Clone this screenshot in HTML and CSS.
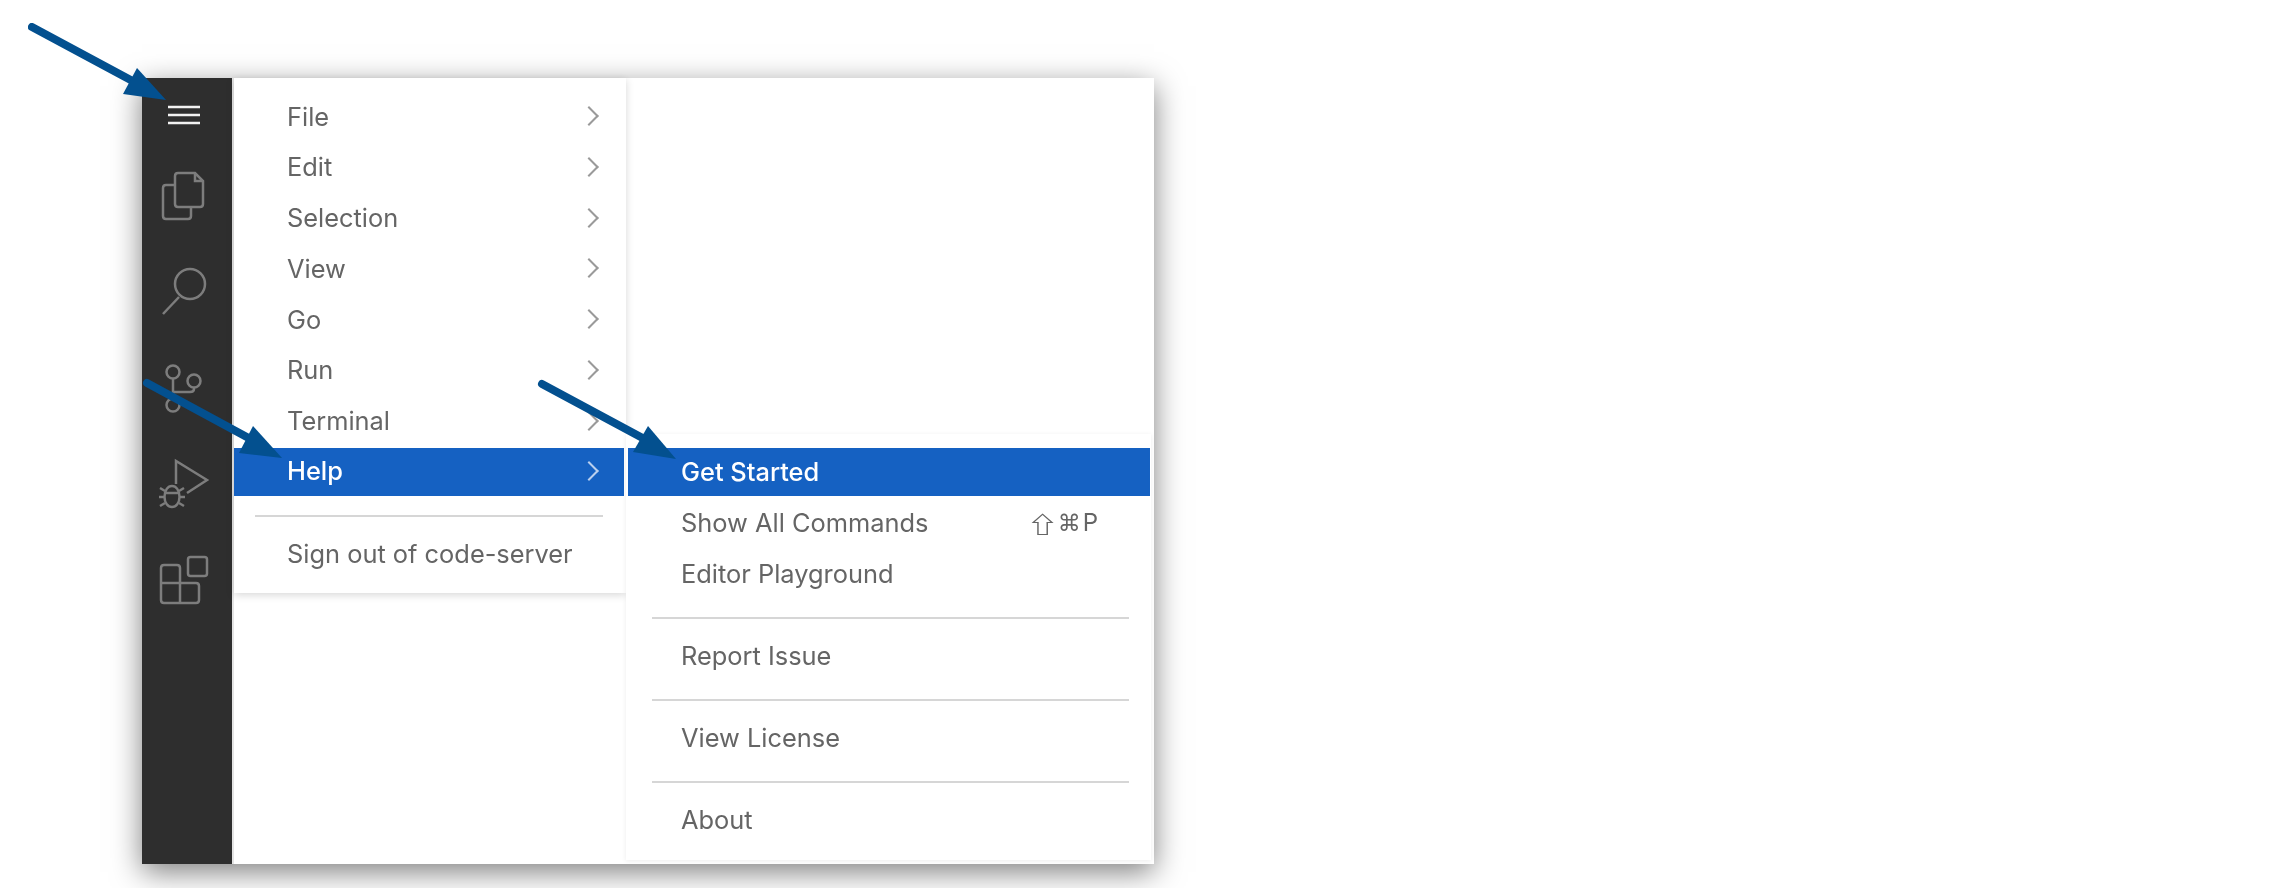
FILE: index.html
```html
<!DOCTYPE html>
<html lang="en">
<head>
    <meta charset="UTF-8">
    <meta name="viewport" content="width=device-width, initial-scale=1.0">
    <title>code-server menu</title>
    <link rel="stylesheet" href="styles.css">
</head>
<body>
    <div class="window">
        <div class="sidebar">
            <div class="action action-menu">
                <svg class="icon" viewBox="156 87 56 56">
                    <path class="white" d="M168 107H200M168 115H200M168 123H200"/>
                </svg>
            </div>
            <div class="action">
                <svg class="icon" viewBox="156 171 56 56">
                    <path d="M175 185H166Q163 185 163 188V216Q163 219 166 219H188Q191 219 191 216V207"/>
                    <path d="M178 173H195L203 181V204Q203 207 200 207H178Q175 207 175 204V176Q175 173 178 173Z"/>
                    <path d="M195 173V181H203"/>
                </svg>
            </div>
            <div class="action">
                <svg class="icon" viewBox="156 265 56 56">
                    <circle cx="190" cy="284" r="15"/>
                    <path d="M179 297L163 314"/>
                </svg>
            </div>
            <div class="action">
                <svg class="icon" viewBox="156 359 56 56">
                    <circle cx="173" cy="372" r="6.5"/>
                    <circle cx="194" cy="381" r="6.5"/>
                    <circle cx="173" cy="405" r="6.5"/>
                    <path d="M173 379V398M194 388V389Q194 392 190 392H173"/>
                </svg>
            </div>
            <div class="action">
                <svg class="icon" viewBox="156 453 56 56">
                    <path d="M176 484V461L207 480L187 493"/>
                    <path d="M164.500 497C164.500 490 168 486 172 486C176 486 179.500 490 179.500 497C179.500 503 176 507 172 507C168 507 164.500 503 164.500 497Z"/>
                    <path d="M165 493H179M160 488L165 491M184 488L179 491M159 497H164M180 497H185M160 506L165 503M184 506L179 503"/>
                </svg>
            </div>
            <div class="action">
                <svg class="icon" viewBox="156 547 56 56">
                    <rect x="188" y="557" width="19" height="19" rx="2.500"/>
                    <path d="M161 583V568Q161 565 164 565H177Q180 565 180 568V583H196Q199 583 199 586V600Q199 603 196 603H164Q161 603 161 600V583H180V603"/>
                </svg>
            </div>
        </div>
        <div class="content">
            <div class="menu menu-main">
                <div class="item"><span>File</span><span class="chevron"></span></div>
                <div class="item"><span>Edit</span><span class="chevron"></span></div>
                <div class="item"><span>Selection</span><span class="chevron"></span></div>
                <div class="item"><span>View</span><span class="chevron"></span></div>
                <div class="item"><span>Go</span><span class="chevron"></span></div>
                <div class="item"><span>Run</span><span class="chevron"></span></div>
                <div class="item"><span>Terminal</span><span class="chevron"></span></div>
                <div class="item active"><span>Help</span><span class="chevron"></span></div>
                <div class="separator"></div>
                <div class="item"><span>Sign out of code-server</span></div>
            </div>
            <div class="menu menu-sub">
                <div class="item active"><span>Get Started</span></div>
                <div class="item"><span>Show All Commands</span><span class="keys"><span class="shift">⇧</span>⌘<span class="key-letter">P</span></span></div>
                <div class="item"><span>Editor Playground</span></div>
                <div class="separator"></div>
                <div class="item"><span>Report Issue</span></div>
                <div class="separator"></div>
                <div class="item"><span>View License</span></div>
                <div class="separator"></div>
                <div class="item"><span>About</span></div>
            </div>
        </div>
    </div>

    <!-- annotation arrows drawn over the screenshot -->
    <svg class="arrows" viewBox="0 0 2284 888">
        <path class="shaft" d="M32 27L140 85"/>
        <path class="head" d="M166 100L137 68L123 94Z"/>
        <path class="shaft" d="M147 383L256 442"/>
        <path class="head" d="M282 458L253 426L239 453Z"/>
        <path class="shaft" d="M542 384L650 442"/>
        <path class="head" d="M676 459L648 426L633 452Z"/>
    </svg>
</body>
</html>
```

FILE: styles.css
```css
body {
    margin: 0;
    height: 888px;
    overflow: hidden;
    background: white;
    font-family: Inter, "Liberation Sans", sans-serif;
    filter: blur(0.4px);
}
.window {
    display: flex;
    width: 1012px;
    height: 786px;
    margin: 78px 0 0 142px;
    background: white;
    box-shadow: 0 8px 28px rgba(0, 0, 0, 0.5);
}
.sidebar {
    width: 90px;
    flex-shrink: 0;
    background-color: #2e2e2e;
    border-right: 2px solid #e4e4e4;
}
.action {
    height: 94px;
    display: flex;
    align-items: center;
    justify-content: center;
    padding-right: 6px;
}
.action-menu {
    height: 74px;
}
.icon {
    width: 56px;
    height: 56px;
    overflow: visible;
    fill: none;
    stroke: #7d7d7d;
    stroke-width: 2.5;
}
.icon .white {
    stroke: #f2f2f2;
}
.content {
    display: flex;
    align-items: flex-start;
    flex: 1;
}
.menu {
    box-sizing: border-box;
    background: white;
    padding: 14px 0 15px;
}
.menu-main {
    width: 392px;
    box-shadow: 0 2px 8px rgba(0, 0, 0, 0.16);
}
.menu-sub {
    width: 525px;
    margin-top: 356px;
    padding-bottom: 16px;
    box-shadow: 0 1px 5px rgba(0, 0, 0, 0.08);
    position: relative;
}
.item {
    display: flex;
    align-items: center;
    justify-content: space-between;
    height: 48px;
    margin: 0 2px 2.8px 0;
    padding: 0 26px 0 53px;
    font-size: 25.4px;
    color: #656565;
}
.item:last-child {
    margin-bottom: 0;
}
.menu-sub .item {
    margin: 0 1px 2.8px 2px;
    padding: 0 52px 0 53px;
}
.menu-sub .item:last-child {
    margin-bottom: 0;
}
.item.active {
    box-sizing: border-box;
    padding-bottom: 2px;
    background-color: #1561c2;
    color: white;
    font-weight: 500;
}
.chevron {
    width: 12px;
    height: 12px;
    margin-right: 2px;
    border-top: 2.5px solid #9a9a9a;
    border-right: 2.5px solid #9a9a9a;
    transform: rotate(45deg);
}
.active .chevron {
    border-color: #b9cfee;
}
.keys {
    display: flex;
    align-items: center;
    font-size: 23px;
    font-family: "DejaVu Sans", sans-serif;
}
.shift {
    display: inline-block;
    margin: 0 4px 0 4px;
    font-family: "Noto Sans CJK JP", "DejaVu Sans", sans-serif;
    font-size: 23px;
    font-weight: 700;
    transform: scaleX(1.4);
}
.key-letter {
    margin-left: 2px;
    font-family: Inter, sans-serif;
    font-size: 24px;
}
.separator {
    height: 2px;
    margin: 19px 23px 13px 21px;
    background-color: #d6d6d6;
}
.menu-sub .separator {
    margin: 19px 22px 13px 26px;
}
.arrows {
    position: absolute;
    left: 0;
    top: 0;
    width: 2284px;
    height: 888px;
}
.shaft {
    stroke: #03508f;
    stroke-width: 8;
    stroke-linecap: round;
    fill: none;
}
.head {
    fill: #03508f;
}
```
